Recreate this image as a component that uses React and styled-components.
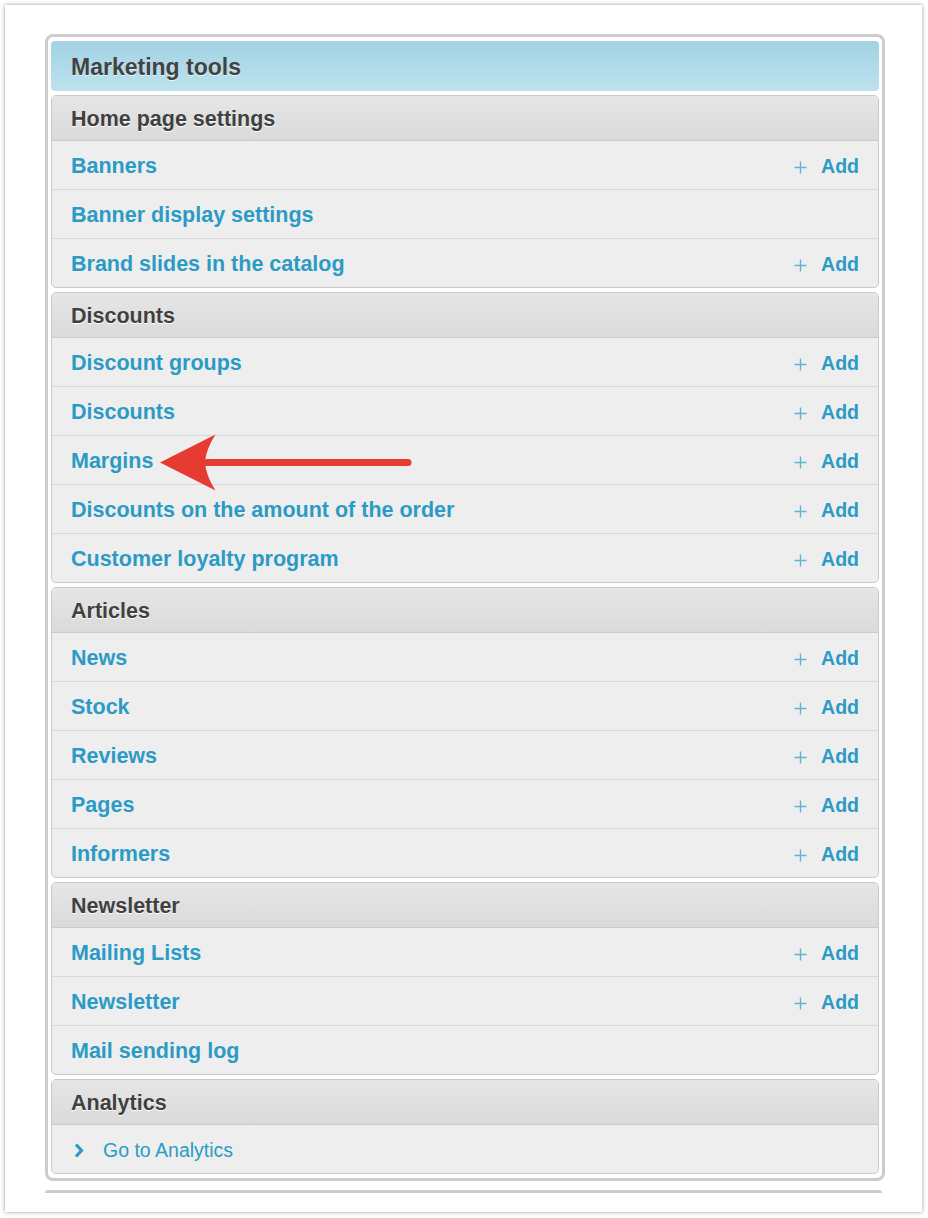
import React from 'react';
import styled, { createGlobalStyle } from 'styled-components';

const SECTIONS = [
  {
    title: 'Home page settings',
    items: [
      { label: 'Banners', add: true },
      { label: 'Banner display settings' },
      { label: 'Brand slides in the catalog', add: true },
    ],
  },
  {
    title: 'Discounts',
    items: [
      { label: 'Discount groups', add: true },
      { label: 'Discounts', add: true },
      { label: 'Margins', add: true },
      { label: 'Discounts on the amount of the order', add: true },
      { label: 'Customer loyalty program', add: true },
    ],
  },
  {
    title: 'Articles',
    items: [
      { label: 'News', add: true },
      { label: 'Stock', add: true },
      { label: 'Reviews', add: true },
      { label: 'Pages', add: true },
      { label: 'Informers', add: true },
    ],
  },
  {
    title: 'Newsletter',
    items: [
      { label: 'Mailing Lists', add: true },
      { label: 'Newsletter', add: true },
      { label: 'Mail sending log' },
    ],
  },
];

export default function App() {
  return (
    <>
      <GlobalStyle />
      <Card>
        <Panel>
          <PanelTitle>Marketing tools</PanelTitle>

          {SECTIONS.map((section) => (
            <Section key={section.title}>
              <SectionHeader>{section.title}</SectionHeader>
              {section.items.map((item) => (
                <Row key={item.label}>
                  <RowLink>{item.label}</RowLink>
                  {item.add && (
                    <AddLink>
                      <PlusIcon />
                      Add
                    </AddLink>
                  )}
                </Row>
              ))}
            </Section>
          ))}

          <Section>
            <SectionHeader>Analytics</SectionHeader>
            <Row>
              <GoLink>
                <ChevronIcon />
                Go to Analytics
              </GoLink>
            </Row>
          </Section>
        </Panel>

        <NextPanelEdge />

        <Arrow />
      </Card>
    </>
  );
}

function PlusIcon() {
  return (
    <svg width="13" height="13" viewBox="0 0 13 13">
      <path d="M6.5 0.5v12M0.5 6.5h12" stroke="#62b2d3" strokeWidth="1.4" fill="none" />
    </svg>
  );
}

function ChevronIcon() {
  return (
    <svg width="10" height="15" viewBox="0 0 10 15">
      <path d="M2 1.5l5.5 6-5.5 6" stroke="#2b9bc6" strokeWidth="3.2" fill="none" />
    </svg>
  );
}

// red annotation arrow pointing at "Margins"
function Arrow() {
  return (
    <ArrowSvg width="262" height="64" viewBox="156 431 262 64">
      <path d="M207 462.5H408" stroke="#e53b30" strokeWidth="7" strokeLinecap="round" fill="none" />
      <path d="M160 462.5L215.5 434.5Q206 449 205 462.5Q206 476 215.5 490.5Z" fill="#e53b30" />
    </ArrowSvg>
  );
}

const GlobalStyle = createGlobalStyle`
  body {
    margin: 0;
    background: #ffffff;
    font-family: "Liberation Sans", Arial, sans-serif;
  }
`;

const Card = styled.div`
  position: relative;
  margin: 5px;
  width: 917px;
  box-sizing: border-box;
  padding: 29px 37px 19px 40px;
  background: #ffffff;
  box-shadow: 0 0 4px rgba(0, 0, 0, 0.4);
`;

const Panel = styled.div`
  display: flex;
  flex-direction: column;
  gap: 4px;
  padding: 4px 3px;
  border: 3px solid #cccccc;
  border-radius: 8px;
`;

const PanelTitle = styled.div`
  display: flex;
  align-items: center;
  box-sizing: border-box;
  height: 50px;
  padding: 2px 0 0 20px;
  border-radius: 4px;
  background: linear-gradient(#a2d2e4, #bee2ee);
  color: #424242;
  font-size: 23px;
  font-weight: 700;
  text-shadow: 0 1px 0 rgba(255, 255, 255, 0.7);
`;

const Section = styled.div`
  border: 1px solid #c9c9c9;
  border-radius: 5px;
  overflow: hidden;
  background: #eeeeee;
`;

const SectionHeader = styled.div`
  display: flex;
  align-items: center;
  box-sizing: border-box;
  height: 45px;
  padding: 2px 0 0 19px;
  border-bottom: 1px solid #cbcbcb;
  background: linear-gradient(#e6e6e6, #dadada);
  color: #404040;
  font-size: 21.5px;
  font-weight: 700;
  text-shadow: 0 1px 0 #ffffff;
`;

const Row = styled.div`
  display: flex;
  align-items: center;
  justify-content: space-between;
  height: 48px;
  padding: 2px 19px 0;
  box-sizing: border-box;

  & + & {
    height: 49px;
    border-top: 1px solid #d9d9d9;
  }
`;

const RowLink = styled.a`
  color: #2b9bc6;
  font-size: 21.5px;
  font-weight: 700;
  cursor: pointer;
`;

const AddLink = styled.a`
  display: flex;
  align-items: center;
  gap: 14px;
  color: #2b9bc6;
  font-size: 19.5px;
  font-weight: 700;
  cursor: pointer;

  svg {
    position: relative;
    top: 1px;
  }
`;

const GoLink = styled.a`
  display: flex;
  align-items: center;
  gap: 19px;
  padding-left: 3px;
  color: #2b9bc6;
  font-size: 19.5px;
  cursor: pointer;
`;

const NextPanelEdge = styled.div`
  height: 0;
  margin: 9px 3px 0 0;
  border-top: 3px solid #cccccc;
  border-radius: 8px 8px 0 0;
`;

const ArrowSvg = styled.svg`
  position: absolute;
  left: 151px;
  top: 426px;
  pointer-events: none;
`;
